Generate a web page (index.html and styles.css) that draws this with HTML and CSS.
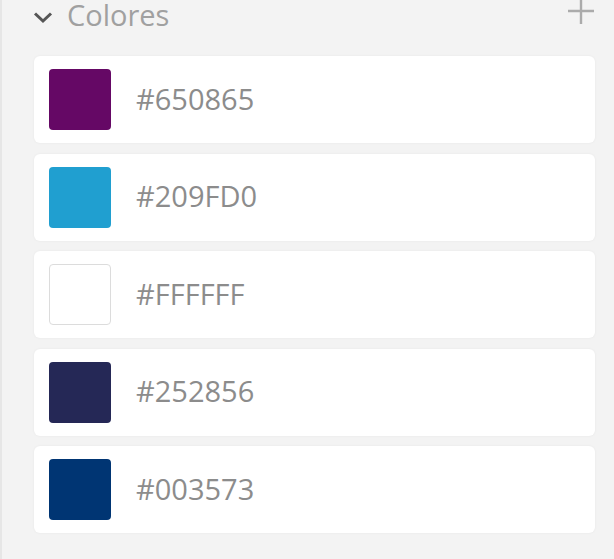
FILE: index.html
```html
<!DOCTYPE html>
<html lang="es">
<head>
<meta charset="utf-8">
<title>Colores</title>
<link rel="stylesheet" href="styles.css">
</head>
<body>
<div class="panel">
  <div class="header">
    <svg class="chev" width="20" height="13" viewBox="0 0 20 13"><polyline points="2,2.5 10,10 18,2.5" fill="none" stroke="#555" stroke-width="3"/></svg>
    <span class="title">Colores</span>
    <svg class="plus" width="26" height="26" viewBox="0 0 26 26"><path d="M13 0V26M0 13H26" stroke="#ababab" stroke-width="2.4"/></svg>
  </div>
  <div class="list">
    <div class="card"><div class="swatch" style="background:#650865"></div><span class="hex">#650865</span></div>
    <div class="card"><div class="swatch" style="background:#209FD0"></div><span class="hex">#209FD0</span></div>
    <div class="card"><div class="swatch white" style="background:#FFFFFF"></div><span class="hex">#FFFFFF</span></div>
    <div class="card"><div class="swatch" style="background:#252856"></div><span class="hex">#252856</span></div>
    <div class="card"><div class="swatch" style="background:#003573"></div><span class="hex">#003573</span></div>
  </div>
</div>
</body>
</html>
```
FILE: styles.css
```css
html, body {
  margin: 0;
  padding: 0;
  background: #f3f3f3;
}
body {
  width: 614px;
  height: 559px;
  overflow: hidden;
  font-family: "Open Sans", "Noto Sans", sans-serif;
}
.panel {
  border-left: 2px solid #e6e6e6;
  height: 559px;
  box-sizing: border-box;
}
.header {
  height: 56px;
  display: flex;
  align-items: flex-start;
  padding-left: 31px;
  padding-right: 20px;
}
.chev {
  margin-top: 11px;
  flex: none;
}
.title {
  margin-left: 14px;
  font-size: 29px;
  line-height: 30px;
  color: #a0a0a0;
}
.plus {
  margin-left: auto;
  margin-top: -2px;
}
.list {
  display: flex;
  flex-direction: column;
  gap: 10.5px;
  padding-left: 32px;
  padding-right: 19px;
}
.card {
  height: 87px;
  background: #fff;
  border-radius: 6px;
  box-shadow: 0 0 3px rgba(0,0,0,0.05);
  display: flex;
  align-items: center;
}
.swatch {
  width: 62px;
  height: 61px;
  border-radius: 4px;
  margin-left: 15px;
  box-sizing: border-box;
}
.swatch.white {
  border: 1.5px solid #dcdcdc;
}
.hex {
  margin-left: 25px;
  margin-top: -3px;
  font-size: 29px;
  color: #8c8c8c;
}
```
